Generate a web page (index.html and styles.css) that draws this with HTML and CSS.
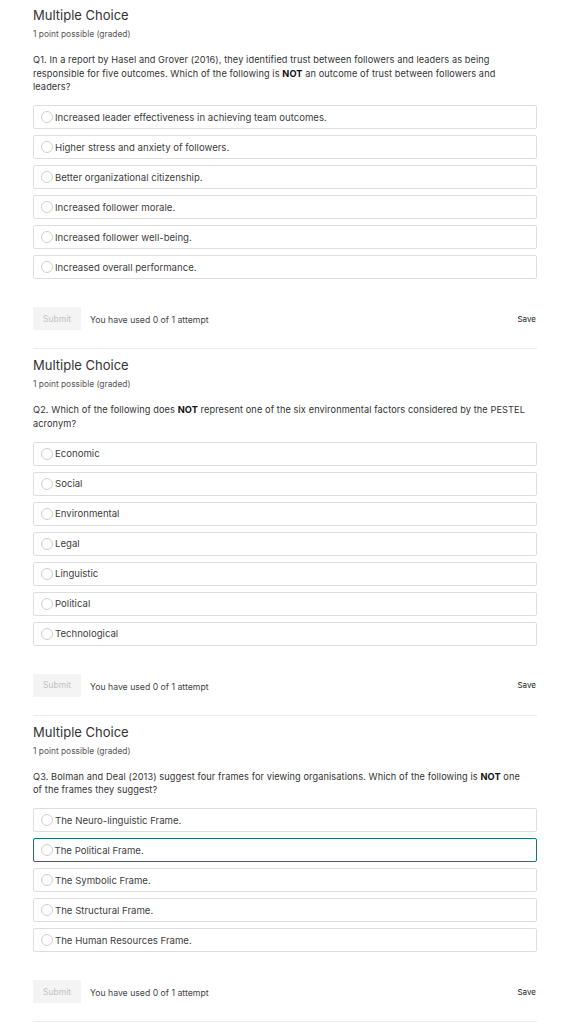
FILE: index.html
```html
<!DOCTYPE html>
<html>
<head>
<meta charset="utf-8">
<link rel="stylesheet" href="styles.css">
</head>
<body>
<div class="page">

<section class="problem">
  <h2 class="title">Multiple Choice</h2>
  <div class="points">1 point possible (graded)</div>
  <p class="question">Q1. In a report by Hasel and Grover (2016), they identified trust between followers and leaders as being<br>responsible for five outcomes. Which of the following is <b>NOT</b> an outcome of trust between followers and<br>leaders?</p>
  <div class="options">
    <label class="option"><span class="radio"></span>Increased leader effectiveness in achieving team outcomes.</label>
    <label class="option"><span class="radio"></span>Higher stress and anxiety of followers.</label>
    <label class="option"><span class="radio"></span>Better organizational citizenship.</label>
    <label class="option"><span class="radio"></span>Increased follower morale.</label>
    <label class="option"><span class="radio"></span>Increased follower well-being.</label>
    <label class="option"><span class="radio"></span>Increased overall performance.</label>
  </div>
  <div class="actions">
    <span class="submit">Submit</span>
    <span class="attempts">You have used 0 of 1 attempt</span>
    <span class="save">Save</span>
  </div>
</section>

<section class="problem">
  <h2 class="title">Multiple Choice</h2>
  <div class="points">1 point possible (graded)</div>
  <p class="question">Q2. Which of the following does <b>NOT</b> represent one of the six environmental factors considered by the PESTEL<br>acronym?</p>
  <div class="options">
    <label class="option"><span class="radio"></span>Economic</label>
    <label class="option"><span class="radio"></span>Social</label>
    <label class="option"><span class="radio"></span>Environmental</label>
    <label class="option"><span class="radio"></span>Legal</label>
    <label class="option"><span class="radio"></span>Linguistic</label>
    <label class="option"><span class="radio"></span>Political</label>
    <label class="option"><span class="radio"></span>Technological</label>
  </div>
  <div class="actions">
    <span class="submit">Submit</span>
    <span class="attempts">You have used 0 of 1 attempt</span>
    <span class="save">Save</span>
  </div>
</section>

<section class="problem">
  <h2 class="title">Multiple Choice</h2>
  <div class="points">1 point possible (graded)</div>
  <p class="question">Q3. Bolman and Deal (2013) suggest four frames for viewing organisations. Which of the following is <b>NOT</b> one<br>of the frames they suggest?</p>
  <div class="options">
    <label class="option"><span class="radio"></span>The Neuro-linguistic Frame.</label>
    <label class="option focused"><span class="radio"></span>The Political Frame.</label>
    <label class="option"><span class="radio"></span>The Symbolic Frame.</label>
    <label class="option"><span class="radio"></span>The Structural Frame.</label>
    <label class="option"><span class="radio"></span>The Human Resources Frame.</label>
  </div>
  <div class="actions">
    <span class="submit">Submit</span>
    <span class="attempts">You have used 0 of 1 attempt</span>
    <span class="save">Save</span>
  </div>
</section>

</div>
</body>
</html>
```

FILE: styles.css
```css
html, body {
  margin: 0;
  padding: 0;
  background: #fff;
}
body {
  font-family: Inter, "Noto Sans", "Liberation Sans", sans-serif;
  color: #313131;
}
.page {
  width: 504px;
  margin-left: 33px;
}
.problem {
  padding-top: 6px;
  padding-bottom: 18px;
  border-bottom: 1px solid #ececec;
  margin-bottom: 1px;
}
.title {
  margin: 0;
  font-size: 13px;
  line-height: 18px;
  font-weight: 400;
  color: #333;
}
.points {
  margin-top: 4px;
  font-size: 8.4px;
  line-height: 12px;
  color: #555;
}
.question {
  margin: 13px 0 0;
  font-size: 9.2px;
  line-height: 13.5px;
  letter-spacing: 0.1px;
  color: #333;
  white-space: nowrap;
}
.question b {
  font-weight: 700;
  color: #111;
}
.options {
  margin-top: 11.5px;
  display: flex;
  flex-direction: column;
  gap: 6px;
}
.option {
  display: flex;
  align-items: center;
  box-sizing: border-box;
  height: 24px;
  border: 1px solid #dedede;
  border-radius: 2px;
  padding-left: 7px;
  font-size: 9.6px;
  color: #404040;
}
.option.focused {
  border: 1.5px solid #1e6f7b;
  padding-left: 6.5px;
}
.radio {
  width: 12px;
  height: 12px;
  box-sizing: border-box;
  border: 1px solid #cfcfcf;
  border-radius: 50%;
  margin-right: 2px;
  flex: none;
}
.actions {
  margin-top: 28px;
  display: flex;
  align-items: center;
  height: 23px;
}
.submit {
  display: flex;
  align-items: center;
  justify-content: center;
  width: 48px;
  height: 23px;
  background: #f4f4f4;
  color: #c2c2c2;
  font-size: 8.5px;
}
.attempts {
  margin-left: 9px;
  font-size: 8.7px;
  color: #444;
  padding-top: 3px;
}
.save {
  margin-left: auto;
  font-size: 8px;
  color: #222;
  padding-right: 1px;
}
```
